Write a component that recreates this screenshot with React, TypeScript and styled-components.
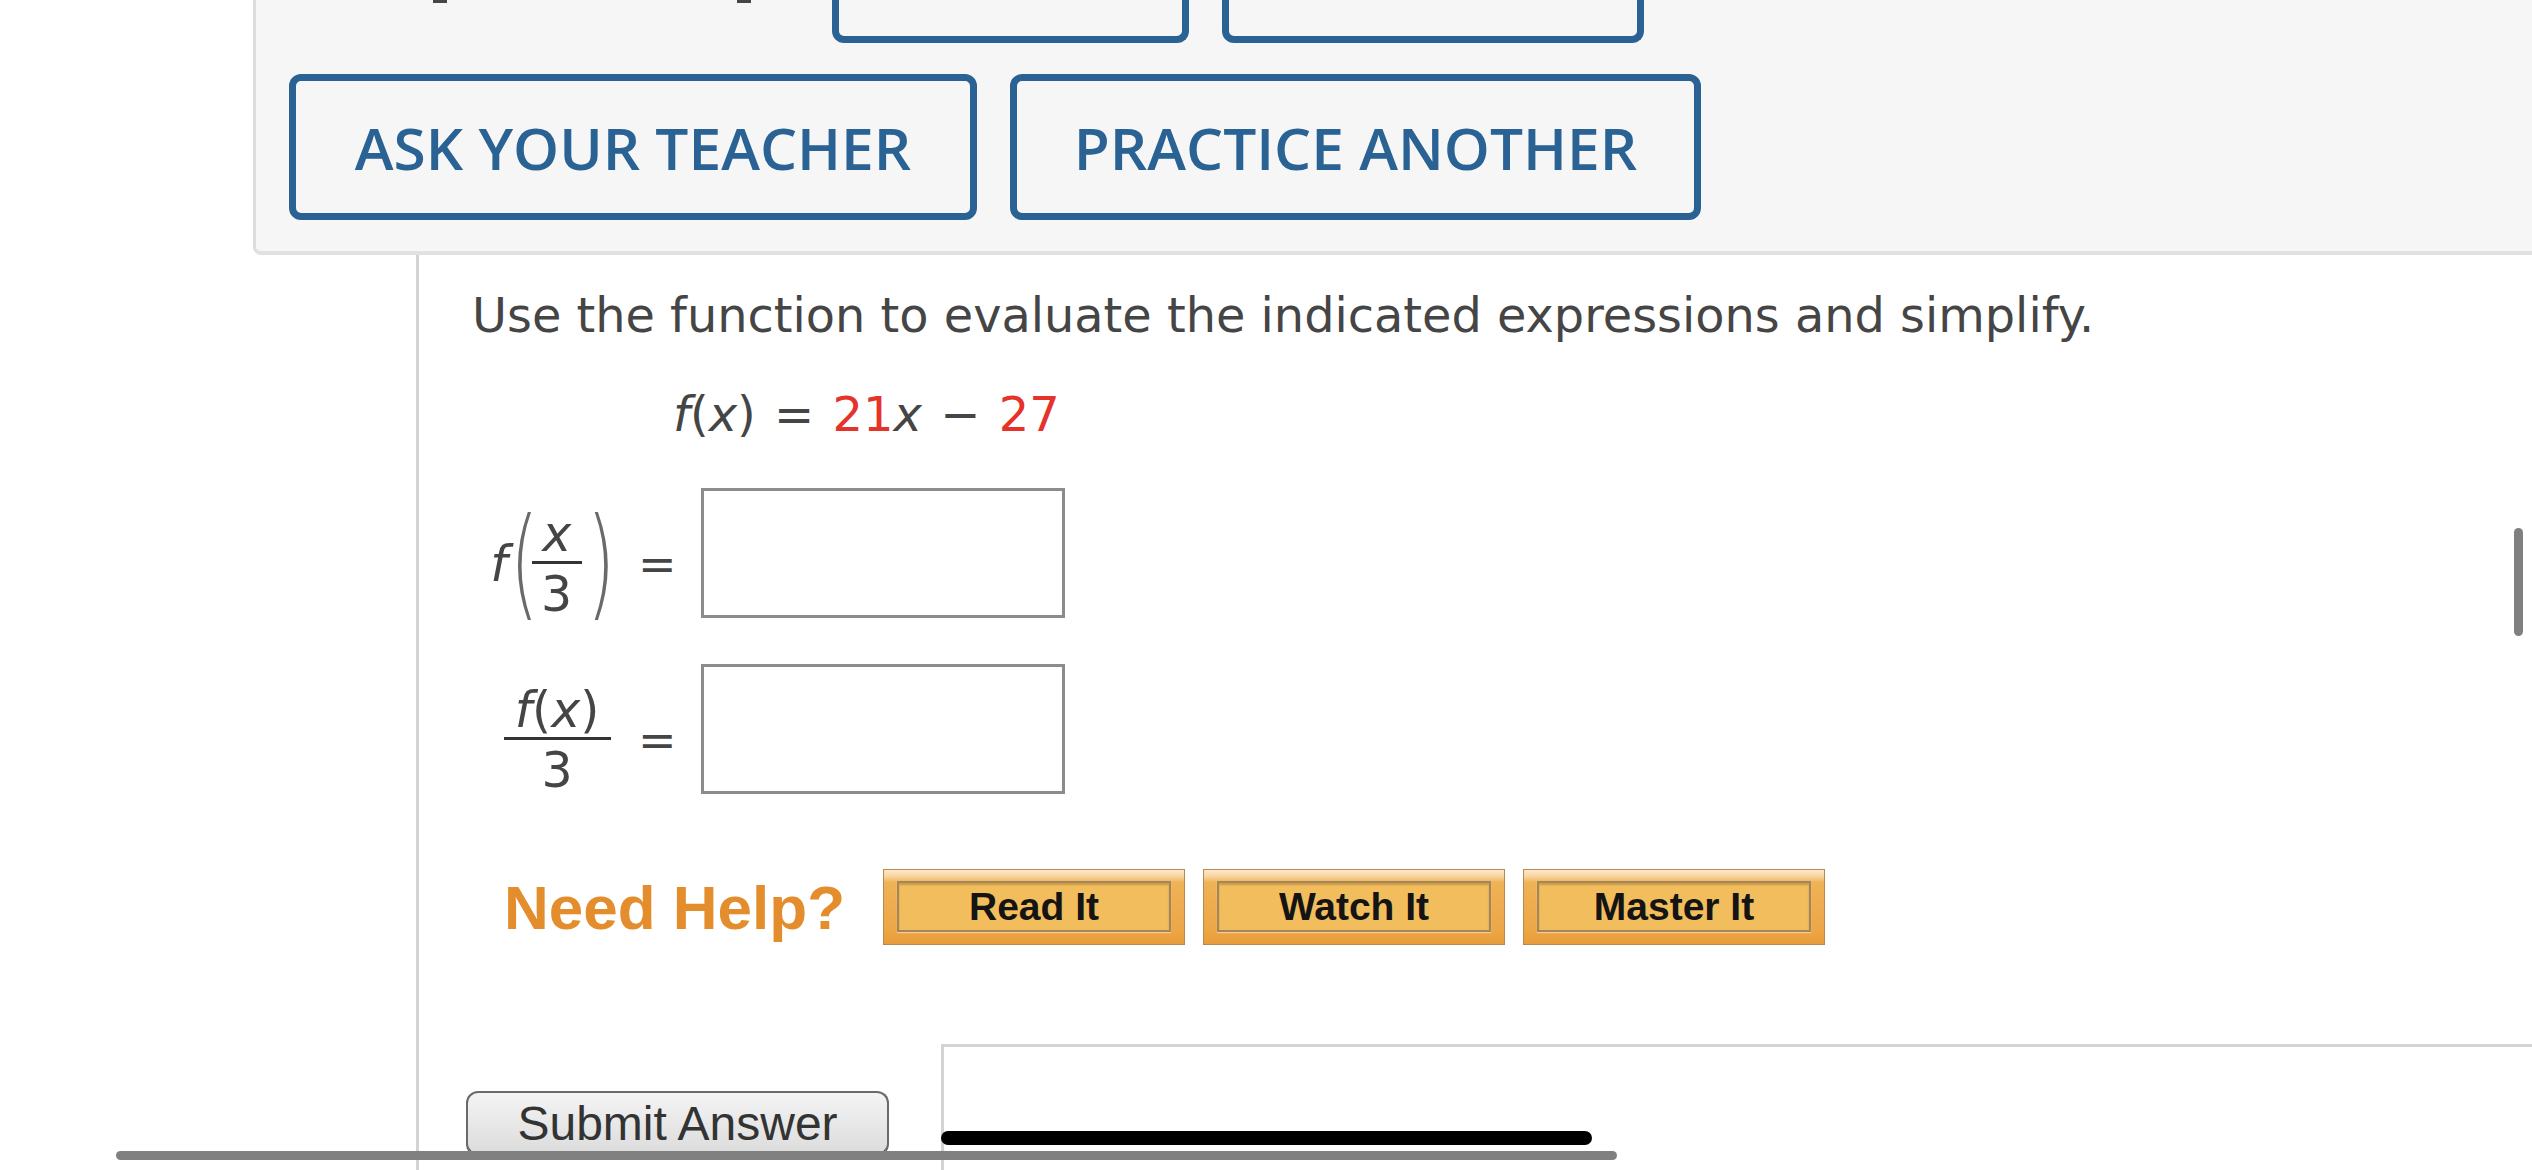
import React from "react";
import styled, { createGlobalStyle } from "styled-components";

const Global = createGlobalStyle`
  html, body { margin: 0; padding: 0; background: #ffffff; }
  body { width: 2532px; height: 1170px; overflow: hidden; }
`;

const Page = styled.div`
  position: relative;
  width: 2532px;
  height: 1170px;
  overflow: hidden;
  display: flex;
  flex-direction: column;
  background: #ffffff;
`;

const Panel = styled.div`
  margin-left: 253px;
  height: 251px;
  background: #f6f6f6;
  border-left: 3px solid #dddddd;
  border-bottom: 4px solid #e1e1e1;
  border-bottom-left-radius: 8px;
  padding-left: 33px;
  display: flex;
  flex-direction: column;
  flex-shrink: 0;
`;

const TopRow = styled.div`
  display: flex;
  align-items: flex-start;
  height: 43px;
`;

const Tick = styled.span<{ $offset: number }>`
  display: block;
  width: 14px;
  height: 3px;
  margin-left: ${(p) => p.$offset}px;
  background: #454545;
`;

const CutButton = styled.div<{ $w: number; $offset: number }>`
  box-sizing: border-box;
  width: ${(p) => p.$w}px;
  height: 43px;
  margin-left: ${(p) => p.$offset}px;
  border: 7px solid #2a6294;
  border-top: none;
  border-radius: 0 0 12px 12px;
`;

const ActionRow = styled.div`
  display: flex;
  gap: 33px;
  margin-top: 31px;
`;

const OutlineButton = styled.button<{ $w: number }>`
  box-sizing: border-box;
  width: ${(p) => p.$w}px;
  height: 146px;
  border: 7px solid #2a6294;
  border-radius: 12px;
  background: transparent;
  color: #2a6294;
  font-family: "Open Sans", sans-serif;
  font-weight: 600;
  font-size: 58.6px;
  padding: 0;
  display: flex;
  align-items: center;
  justify-content: center;
  white-space: nowrap;
`;

const Content = styled.div`
  flex: 1;
  margin-left: 416px;
  border-left: 3px solid #d3d3d3;
  padding-left: 51px;
  display: flex;
  flex-direction: column;
  font-family: "DejaVu Sans", Verdana, sans-serif;
  color: #454545;
`;

const Prompt = styled.div`
  margin-top: 33px;
  margin-left: 2px;
  font-size: 47.8px;
  line-height: 56px;
  white-space: nowrap;
`;

const Equation = styled.div`
  margin-top: 42px;
  margin-left: 203px;
  font-size: 48px;
  line-height: 56px;
  word-spacing: 3px;
  white-space: nowrap;
`;

const Var = styled.i`
  font-style: italic;
`;

const Coef = styled.span`
  color: #e5322b;
`;

const Answers = styled.div`
  margin-top: 46px;
  margin-left: 8px;
  display: flex;
  flex-direction: column;
  gap: 46px;
`;

const AnswerRow = styled.div`
  display: flex;
  align-items: center;
`;

const Label = styled.div<{ $shift: number }>`
  width: 140px;
  height: 130px;
  display: flex;
  align-items: center;
  justify-content: center;
  font-size: 49px;
  line-height: 46px;
  padding-top: 24px;
  padding-left: ${(p) => p.$shift}px;
  box-sizing: border-box;
`;

const Equals = styled.span`
  margin-left: 20px;
  width: 36px;
  font-size: 46px;
  line-height: 46px;
  padding-top: 22px;
`;

const AnswerBox = styled.input`
  box-sizing: border-box;
  margin-left: 27px;
  width: 364px;
  height: 130px;
  border: 3px solid #8c8c8c;
  background: #ffffff;
  outline: none;
`;

const Frac = styled.span`
  display: inline-flex;
  flex-direction: column;
  align-items: center;
`;

const Num = styled.span<{ $w: number }>`
  min-width: ${(p) => p.$w}px;
  text-align: center;
  padding-bottom: 3px;
  border-bottom: 3px solid #333333;
`;

const Den = styled.span<{ $pad: number }>`
  padding-top: ${(p) => p.$pad}px;
`;

const BigParen = styled.span<{ $w: number; $after: number }>`
  display: inline-block;
  width: ${(p) => p.$w}px;
  margin-right: ${(p) => p.$after}px;
  font-size: 122px;
  line-height: 122px;
  font-weight: 200;
  color: #6a6a6a;
  transform: scaleX(0.6);
  text-align: center;
  margin-top: -6px;
`;

const HelpRow = styled.div`
  display: flex;
  align-items: center;
  margin-top: 75px;
`;

const HelpLabel = styled.span`
  width: 379px;
  margin-left: 34px;
  font-family: "Liberation Sans", Arial, sans-serif;
  font-weight: 700;
  font-size: 62px;
  color: #e48d2d;
  white-space: nowrap;
`;

const HelpButtons = styled.div`
  display: flex;
  gap: 18px;
`;

const HelpButton = styled.div`
  box-sizing: border-box;
  width: 302px;
  height: 76px;
  border: 1px solid #b98a50;
  background: linear-gradient(
    to bottom,
    #fbe9d0 0%,
    #f7d39a 9%,
    #efb256 17%,
    #eca747 80%,
    #e89c3a 100%
  );
  padding: 11px 13px 12px;
  display: flex;
`;

const HelpInner = styled.div`
  flex: 1;
  border: 2px solid #a3865c;
  box-shadow: inset 0 2px 2px rgba(130, 90, 30, 0.35), 0 1px 1px rgba(255, 230, 190, 0.6);
  background: #f2bd5c;
  display: flex;
  align-items: center;
  justify-content: center;
  font-family: "Liberation Sans", Arial, sans-serif;
  font-weight: 700;
  font-size: 39px;
  color: #141414;
`;

const SubmitRow = styled.div`
  flex: 1;
  display: flex;
  align-items: flex-start;
  margin-top: 99px;
`;

const SubmitButton = styled.button`
  box-sizing: border-box;
  margin-top: 47px;
  margin-left: -4px;
  width: 423px;
  height: 65px;
  border: 2px solid #6a6a6a;
  border-bottom: 3px solid #4a4a4a;
  border-radius: 12px;
  background: linear-gradient(to bottom, #f4f4f4, #dcdcdc);
  font-family: "Liberation Sans", Arial, sans-serif;
  font-size: 48px;
  color: #333333;
  padding: 0;
`;

const ResultBox = styled.div`
  align-self: stretch;
  flex: 1;
  margin-left: 52px;
  border-top: 3px solid #d3d3d3;
  border-left: 3px solid #d3d3d3;
`;

const Indicator = styled.div<{ $x: number; $y: number; $w: number; $h: number; $c: string }>`
  position: absolute;
  left: ${(p) => p.$x}px;
  top: ${(p) => p.$y}px;
  width: ${(p) => p.$w}px;
  height: ${(p) => p.$h}px;
  background: ${(p) => p.$c};
  border-radius: ${(p) => Math.min(p.$w, p.$h) / 2}px;
`;

const helpItems = ["Read It", "Watch It", "Master It"];

export default function App() {
  return (
    <Page>
      <Global />
      <Panel>
        <TopRow>
          <Tick $offset={144} />
          <Tick $offset={290} />
          <CutButton $w={357} $offset={81} />
          <CutButton $w={422} $offset={33} />
        </TopRow>
        <ActionRow>
          <OutlineButton $w={688}>ASK YOUR TEACHER</OutlineButton>
          <OutlineButton $w={691}>PRACTICE ANOTHER</OutlineButton>
        </ActionRow>
      </Panel>

      <Content>
        <Prompt>Use the function to evaluate the indicated expressions and simplify.</Prompt>
        <Equation>
          <Var>f</Var>(<Var>x</Var>) = <Coef>21</Coef>
          <Var>x</Var> − <Coef>27</Coef>
        </Equation>

        <Answers>
          <AnswerRow>
            <Label $shift={0}>
              <Var>f</Var>
              <BigParen $w={10} $after={14}>(</BigParen>
              <Frac>
                <Num $w={50}>
                  <Var>x</Var>
                </Num>
                <Den $pad={8}>3</Den>
              </Frac>
              <BigParen $w={24} $after={0}>)</BigParen>
            </Label>
            <Equals>=</Equals>
            <AnswerBox type="text" aria-label="f(x/3)" />
          </AnswerRow>
          <AnswerRow>
            <Label $shift={18}>
              <Frac>
                <Num $w={107}>
                  <Var>f</Var>(<Var>x</Var>)
                </Num>
                <Den $pad={8}>3</Den>
              </Frac>
            </Label>
            <Equals>=</Equals>
            <AnswerBox type="text" aria-label="f(x)/3" />
          </AnswerRow>
        </Answers>

        <HelpRow>
          <HelpLabel>Need Help?</HelpLabel>
          <HelpButtons>
            {helpItems.map((t) => (
              <HelpButton key={t}>
                <HelpInner>{t}</HelpInner>
              </HelpButton>
            ))}
          </HelpButtons>
        </HelpRow>

        <SubmitRow>
          <SubmitButton>Submit Answer</SubmitButton>
          <ResultBox />
        </SubmitRow>
      </Content>

      <Indicator $x={2514} $y={528} $w={9} $h={108} $c="#808080" />
      <Indicator $x={941} $y={1131} $w={651} $h={14} $c="#000000" />
      <Indicator $x={116} $y={1151} $w={1501} $h={9} $c="#808080" />
    </Page>
  );
}
